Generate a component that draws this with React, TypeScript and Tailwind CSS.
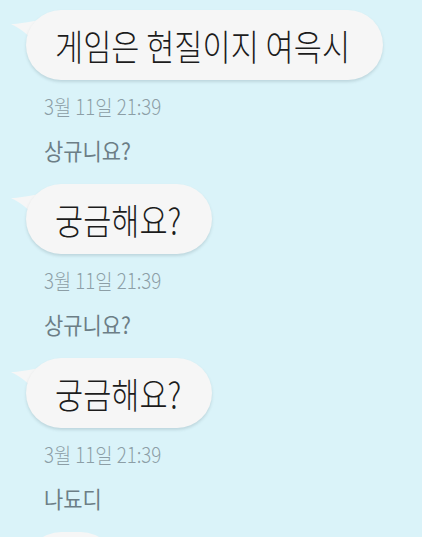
import React from "react";

const FONT = '"Noto Sans CJK KR", "Noto Sans", sans-serif';

interface Msg {
  text: string;
  width: number;
  time: string;
  name: string;
}

const messages: Msg[] = [
  { text: "게임은 현질이지 여윽시", width: 357, time: "3월 11일 21:39", name: "상규니요?" },
  { text: "궁금해요?", width: 186, time: "3월 11일 21:39", name: "상규니요?" },
  { text: "궁금해요?", width: 186, time: "3월 11일 21:39", name: "나됴디" },
];

function Bubble({ text, width }: { text: string; width: number }) {
  return (
    <div className="relative ml-[26px] self-start" style={{ width }}>
      <svg
        className="absolute left-[-16px] top-[10px]"
        width="34"
        height="28"
        viewBox="0 0 34 28"
      >
        <path d="M1 4 C 8 4, 18 2, 30 0 L 26 24 C 20 16, 10 8, 1 4 Z" fill="#f6f6f6" />
      </svg>
      <div className="relative flex h-[70px] items-center overflow-hidden whitespace-nowrap rounded-full bg-[#f6f6f6] pl-[29px] shadow-[0_2px_3px_rgba(60,90,100,0.18)]">
        <span className="inline-block origin-left scale-x-[0.85] text-[36px] font-light leading-none text-[#1c1c1c]">
          {text}
        </span>
      </div>
    </div>
  );
}

export default function App() {
  return (
    <div
      className="h-[537px] w-[422px] overflow-hidden bg-[#daf3f9] pt-[10px]"
      style={{ fontFamily: FONT }}
    >
      <div className="flex flex-col">
        {messages.map((m, i) => (
          <div key={i} className="flex flex-col pb-[20px]">
            <Bubble text={m.text} width={m.width} />
            <div className="ml-[44px] mt-[14px] h-[24px] origin-left scale-x-[0.89] text-[21px] font-light leading-[24px] text-[#8c9ea6]">
              {m.time}
            </div>
            <div className="ml-[44px] mt-[18px] h-[28px] origin-left scale-x-[0.91] text-[23px] leading-[28px] text-[#6c7e86]">
              {m.name}
            </div>
          </div>
        ))}
        <div className="ml-[26px] h-[70px] w-[90px] rounded-full bg-[#f6f6f6]" />
      </div>
    </div>
  );
}
